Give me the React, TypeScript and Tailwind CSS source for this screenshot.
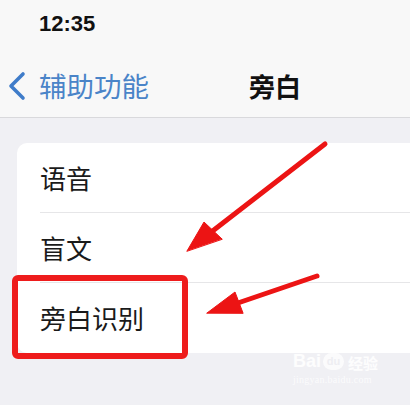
import React from "react";

const FONT = {
  fontFamily: '"Noto Sans CJK SC", "Noto Sans", "Liberation Sans", sans-serif',
};

const ROWS = ["语音", "盲文", "旁白识别"];

function Watermark() {
  return (
    <div className="absolute left-[293px] top-[352px] flex flex-col items-start text-white/85 select-none">
      <div className="flex items-end gap-[2px]">
        <span className="text-[18px] font-bold leading-none" style={{ fontFamily: '"Liberation Sans", sans-serif' }}>
          Bai
        </span>
        <span className="relative w-[21px] h-[17px] rounded-full bg-white/75 text-[#eeeef2] text-[11px] font-bold leading-[17px] text-center" style={{ fontFamily: '"Liberation Sans", sans-serif' }}>
          du
          <span className="absolute -top-[10px] left-[3px] flex gap-[2px]">
            <span className="w-[4px] h-[6px] rounded-full bg-white/75" />
            <span className="w-[4px] h-[7px] rounded-full bg-white/75" />
            <span className="w-[4px] h-[6px] rounded-full bg-white/75" />
          </span>
        </span>
        <span className="text-[15px] font-bold leading-none ml-[2px]">经验</span>
      </div>
      <span className="mt-[5px] text-[10px] leading-none text-white/75 tracking-wide" style={{ fontFamily: '"Liberation Serif", serif' }}>
        jingyan.baidu.com
      </span>
    </div>
  );
}

function Arrows() {
  return (
    <svg className="absolute inset-0 pointer-events-none" width="410" height="405" viewBox="0 0 410 405">
      <g fill="#ec1414" stroke="#ec1414" strokeLinecap="round" strokeLinejoin="round">
        <line x1="325" y1="144" x2="210" y2="233" strokeWidth="5" />
        <polygon points="187,251 204,222 222,239" strokeWidth="1" />
        <line x1="317" y1="276" x2="232" y2="305" strokeWidth="5" />
        <polygon points="207,313 235,292 243,313" strokeWidth="1" />
      </g>
    </svg>
  );
}

export default function App() {
  return (
    <div className="relative w-[410px] h-[405px] overflow-hidden bg-[#f0f0f4]" style={FONT}>
      {/* status bar */}
      <div className="h-[47px] flex items-center pl-[39px] bg-[#f8f8f8]">
        <span className="text-[22px] font-semibold text-[#111] leading-none" style={{ fontFamily: '"Liberation Sans", sans-serif' }}>
          12:35
        </span>
      </div>

      {/* nav bar */}
      <div className="h-[71px] pt-[8px] flex items-center bg-[#f8f8f8] border-b border-[#d9d9dc]">
        <svg className="ml-[6px]" width="22" height="30" viewBox="0 0 22 30">
          <path d="M17 3 L5 15 L17 27" fill="none" stroke="#3f7cc9" strokeWidth="3.6" strokeLinecap="round" strokeLinejoin="round" />
        </svg>
        <span className="ml-[11px] text-[27.5px] leading-none text-[#4a84c8]">辅助功能</span>
        <span className="ml-[100px] text-[26px] leading-none font-bold text-[#111]">旁白</span>
      </div>

      {/* list */}
      <div className="pt-[25px]">
        <div className="ml-[17px] bg-white rounded-l-[10px]">
          {ROWS.map((label, i) => (
            <div key={label} className="pl-[23px]">
              <div
                className={`h-[70px] flex items-center ${i < ROWS.length - 1 ? "border-b border-[#e6e6e8]" : ""}`}
              >
                <span className="text-[26px] leading-none text-[#1a1a1a]">{label}</span>
              </div>
            </div>
          ))}
        </div>
      </div>

      {/* highlight box */}
      <div className="absolute left-[12px] top-[275px] w-[176px] h-[84px] border-[6px] border-[#ee1c1c] rounded-[6px]" />

      <Arrows />
      <Watermark />
    </div>
  );
}
